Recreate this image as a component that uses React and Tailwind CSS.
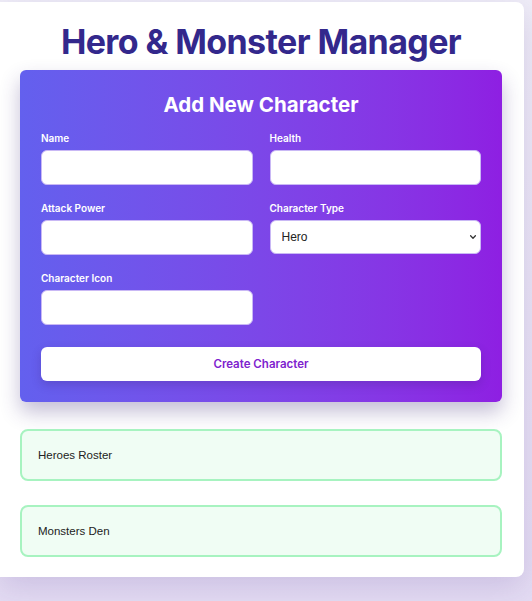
import { useState } from "react";

const Field = ({ label, children }) => (
	<div className="flex flex-col">
		<label className="text-[10px] leading-[14px] font-semibold text-white mb-[5px]">{label}</label>
		{children}
	</div>
);

const inputCls =
	"h-[35px] w-full rounded-md bg-white border border-[#c9b8f5] px-3 text-[12px] text-[#333] outline-none";

const RosterBox = ({ title }) => (
	<div className="h-[52px] flex items-center px-4 pt-[2px] bg-[#f0fdf4] border-2 border-[#a7f3c0] rounded-lg">
		<span className="text-[11.5px] text-[#222]" style={{ fontFamily: '"Liberation Sans", Arial, sans-serif' }}>
			{title}
		</span>
	</div>
);

const App = () => {
	const [type, setType] = useState("hero");

	return (
		<div
			className="min-h-screen w-full bg-gradient-to-b from-[#efedf7] to-[#e4dcf3] pt-[2px] pb-6"
			style={{ fontFamily: "Inter, sans-serif" }}
		>
			<div className="w-[524px] bg-white rounded-r-lg shadow-[0_10px_30px_rgba(90,60,150,0.18)] pt-[20px] pb-[20px] pl-5 pr-[22px]">
				<h1 className="text-[34px] leading-[40px] font-bold text-center text-[#33288c] tracking-[-0.6px]">
					Hero &amp; Monster Manager
				</h1>

				<div className="mt-[8px] rounded-md bg-gradient-to-r from-[#6360ee] to-[#8e1fe2] p-[21px] shadow-[0_10px_20px_rgba(60,40,120,0.3)]">
					<h2 className="text-[20.5px] leading-[28px] font-bold text-white text-center mb-3">
						Add New Character
					</h2>

					<div className="grid grid-cols-2 gap-x-[17px] gap-y-[16px]">
						<Field label="Name">
							<input className={inputCls} type="text" />
						</Field>
						<Field label="Health">
							<input className={inputCls} type="number" />
						</Field>
						<Field label="Attack Power">
							<input className={inputCls} type="number" />
						</Field>
						<Field label="Character Type">
							<div className="relative">
								<select
									value={type}
									onChange={(e) => setType(e.target.value)}
									className="h-[34px] w-full appearance-none rounded-md bg-white border border-[#c9b8f5] pl-[11px] text-[12px] text-[#222] outline-none"
									style={{ fontFamily: '"Liberation Sans", Arial, sans-serif' }}
								>
									<option value="hero">Hero</option>
									<option value="monster">Monster</option>
								</select>
								<svg
									className="absolute right-[4px] top-1/2 -translate-y-1/2 pointer-events-none"
									width="8"
									height="8"
									viewBox="0 0 10 10"
								>
									<path d="M2 3.5 L5 6.5 L8 3.5" fill="none" stroke="#333" strokeWidth="1.6" strokeLinecap="round" strokeLinejoin="round" />
								</svg>
							</div>
						</Field>
						<Field label="Character Icon">
							<input className={inputCls} type="text" />
						</Field>
					</div>

					<button className="mt-[22px] w-full h-[34px] rounded-md bg-white text-[#7e22ce] text-[11.5px] font-semibold pt-[2px] shadow-[0_4px_10px_rgba(60,30,120,0.25)]">
						Create Character
					</button>
				</div>

				<div className="mt-[27px] flex flex-col gap-6">
					<RosterBox title="Heroes Roster" />
					<RosterBox title="Monsters Den" />
				</div>
			</div>
		</div>
	);
};

export default App;
